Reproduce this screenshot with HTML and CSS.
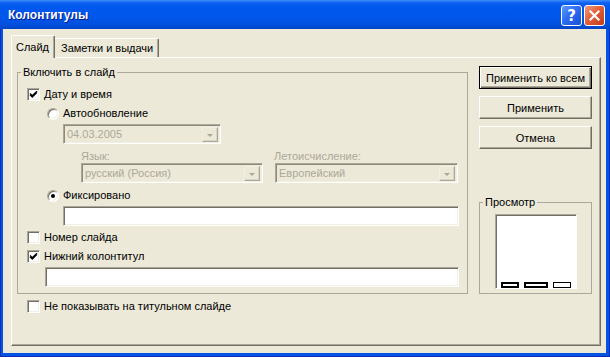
FILE: index.html
```html
<!DOCTYPE html>
<html lang="ru">

<head>
    <meta charset="UTF-8">
    <title>Колонтитулы</title>
    <link rel="stylesheet" href="styles.css">
</head>

<body>
    <main class="window">
        <header class="titlebar">
            <span class="title">Колонтитулы</span>
            <div class="caption-buttons">
                <div class="cap-btn help">?</div>
                <div class="cap-btn close">
                    <svg width="19" height="19" viewBox="0 0 19 19">
                        <path d="M5.5 5.5 L13.5 13.5 M13.5 5.5 L5.5 13.5" stroke="#fff" stroke-width="2.2" stroke-linecap="square" />
                    </svg>
                </div>
            </div>
        </header>

        <section class="client">
            <nav class="tabs">
                <div class="tab active">Слайд</div>
                <div class="tab">Заметки и выдачи</div>
            </nav>

            <section class="panel">
                <div class="left-col">
                    <fieldset class="group main-group">
                        <legend>Включить в слайд</legend>

                        <div class="row r-date">
                            <span class="check on"><svg width="9" height="9" viewBox="0 0 9 9"><path d="M1 3.5 L3.3 5.8 L8 1.2 M1 4.7 L3.3 7 L8 2.4" stroke="#000" stroke-width="1.3" fill="none" /></svg></span>
                            Дату и время
                        </div>
                        <div class="row r-auto">
                            <span class="radio"></span>
                            Автообновление
                        </div>
                        <div class="combo date-combo">
                            <span class="combo-text">04.03.2005</span>
                            <span class="combo-btn"><i class="arrow"></i></span>
                        </div>
                        <div class="row labels">
                            <span class="label lang-label">Язык:</span>
                            <span class="label">Летоисчисление:</span>
                        </div>
                        <div class="combos">
                            <div class="combo lang-combo">
                                <span class="combo-text">русский (Россия)</span>
                                <span class="combo-btn"><i class="arrow"></i></span>
                            </div>
                            <div class="combo cal-combo">
                                <span class="combo-text">Европейский</span>
                                <span class="combo-btn"><i class="arrow"></i></span>
                            </div>
                        </div>
                        <div class="row r-fixed">
                            <span class="radio on"></span>
                            Фиксировано
                        </div>
                        <div class="textbox fixed-box"></div>
                        <div class="row r-num">
                            <span class="check"></span>
                            Номер слайда
                        </div>
                        <div class="row r-footer">
                            <span class="check on"><svg width="9" height="9" viewBox="0 0 9 9"><path d="M1 3.5 L3.3 5.8 L8 1.2 M1 4.7 L3.3 7 L8 2.4" stroke="#000" stroke-width="1.3" fill="none" /></svg></span>
                            Нижний колонтитул
                        </div>
                        <div class="textbox footer-box"></div>
                    </fieldset>

                    <div class="row r-title">
                        <span class="check"></span>
                        Не показывать на титульном слайде
                    </div>
                </div>

                <div class="right-col">
                    <div class="btn default">Применить ко всем</div>
                    <div class="btn">Применить</div>
                    <div class="btn">Отмена</div>

                    <fieldset class="group preview-group">
                        <legend>Просмотр</legend>
                        <div class="preview">
                            <div class="bars">
                                <span class="bar"></span>
                                <span class="bar wide"></span>
                                <span class="bar thin"></span>
                            </div>
                        </div>
                    </fieldset>
                </div>
            </section>
        </section>
    </main>
</body>

</html>
```

FILE: styles.css
```css
body {
    margin: 0;
    background: #fff;
    font-family: 'Liberation Sans', Arial, sans-serif;
    font-size: 11px;
    color: #000;
}

.window {
    width: 610px;
    height: 357px;
    display: flex;
    flex-direction: column;
    background: #0553e2;
    box-shadow: inset 1px 0 #0a2cc0, inset -1px 0 #0a2cc0, inset 0 -1px #0a2cc0;
}

/* title bar */

.titlebar {
    height: 29px;
    flex: none;
    display: flex;
    align-items: center;
    justify-content: space-between;
    padding: 0 5px 0 8px;
    background: linear-gradient(#3d8ef9 0, #0b5fef 3px, #0058ee 8px, #0156ea 60%, #0150de 85%, #0144c4 100%);
}

.title {
    color: #fff;
    font-weight: bold;
    font-size: 12px;
    text-shadow: 1px 1px #0a1a8c;
    margin-top: 1px;
}

.caption-buttons {
    display: flex;
    gap: 2px;
    margin-top: 2px;
}

.cap-btn {
    width: 21px;
    height: 21px;
    box-sizing: border-box;
    border: 1px solid #fff;
    border-radius: 3px;
    display: flex;
    align-items: center;
    justify-content: center;
}

.help {
    background: linear-gradient(135deg, #5c9cff 0, #2e6cf0 45%, #1650d8 100%);
    color: #fff;
    font-weight: bold;
    font-size: 15px;
    font-family: 'DejaVu Sans', sans-serif;
}

.close {
    background: linear-gradient(135deg, #f09a7c 0, #e2603a 45%, #c13a18 100%);
}

/* dialog body */

.client {
    flex: 1;
    margin: 0 4px 4px 3px;
    background: #ece9d8;
    padding: 6px 5px 7px 8px;
    box-sizing: border-box;
}

.tabs {
    height: 22px;
    display: flex;
    align-items: flex-end;
}

.tab {
    height: 19px;
    box-sizing: border-box;
    padding: 3px 5px 0 6px;
    line-height: 13px;
    border-top: 1px solid #fff;
    border-right: 1px solid #716f64;
    box-shadow: inset -1px 0 #aca899;
    border-radius: 0 2px 0 0;
    background: #ece9d8;
}

.tab.active {
    height: 23px;
    margin-bottom: -1px;
    padding: 5px 6px 0 4px;
    border-left: 1px solid #fff;
    border-radius: 2px 2px 0 0;
    position: relative;
    z-index: 1;
    width: 44px;
}

.panel {
    height: 289px;
    box-sizing: border-box;
    border: 1px solid;
    border-color: #fff #716f64 #716f64 #fff;
    box-shadow: inset -1px -1px #aca899;
    padding: 8px 7px 0 5px;
    display: flex;
    gap: 11px;
}

/* group boxes */

.group {
    margin: 0;
    box-sizing: border-box;
    border: 1px solid #aca899;
    min-width: 0;
}

.group legend {
    padding: 0 2px;
    line-height: 13px;
    height: 13px;
}

.main-group {
    width: 451px;
    height: 228px;
    padding: 9px 8px 5px 9px;
}

.main-group legend {
    margin-left: -6px;
}

.row {
    display: flex;
    align-items: center;
    height: 13px;
    line-height: 13px;
    white-space: nowrap;
}

.row .check {
    margin-right: 4px;
}

.row .radio {
    margin-right: 4px;
}

.r-auto {
    margin: 6px 0 0 20px;
}

.date-combo {
    width: 158px;
    margin: 4px 0 0 36px;
}

.labels {
    margin: 6px 0 0 54px;
    color: #aca899;
}

.lang-label {
    width: 193px;
}

.combos {
    display: flex;
    gap: 12px;
    margin-left: 54px;
}

.lang-combo {
    width: 182px;
    height: 21px;
}

.cal-combo {
    width: 183px;
    height: 21px;
}

.r-fixed {
    margin: 6px 0 0 20px;
}

.fixed-box {
    width: 396px;
    margin: 4px 0 0 36px;
}

.r-num {
    margin-top: 5px;
}

.r-footer {
    margin-top: 6px;
}

.footer-box {
    width: 414px;
    margin: 4px 0 0 18px;
}

.r-title {
    margin: 6px 0 0 10px;
}

/* controls */

.check {
    width: 13px;
    height: 13px;
    flex: none;
    box-sizing: border-box;
    background: #fff;
    border: 1px solid;
    border-color: #aca899 #fff #fff #aca899;
    box-shadow: inset 1px 1px #716f64, inset -1px -1px #f1efe2;
    display: flex;
    align-items: center;
    justify-content: center;
}

.radio {
    width: 12px;
    height: 12px;
    flex: none;
    box-sizing: border-box;
    border-radius: 50%;
    background: #fff;
    border: 1px solid;
    border-color: #aca899 #fff #fff #aca899;
    box-shadow: inset 1px 1px #716f64, inset -1px -1px #f1efe2;
    display: flex;
    align-items: center;
    justify-content: center;
}

.radio.on::after {
    content: '';
    width: 4px;
    height: 4px;
    border-radius: 50%;
    background: #000;
}

.combo {
    height: 20px;
    box-sizing: border-box;
    display: flex;
    align-items: stretch;
    border: 1px solid;
    border-color: #aca899 #fff #fff #aca899;
    box-shadow: inset 1px 1px #8d8a7c, inset -1px -1px #f1efe2;
    padding: 2px 2px 1px 2px;
    color: #aca899;
}

.combo-text {
    flex: 1;
    padding-left: 1px;
    line-height: 15px;
}

.combo-btn {
    width: 16px;
    box-sizing: border-box;
    border: 1px solid;
    border-color: #f1efe2 #aca899 #aca899 #f1efe2;
    box-shadow: inset -1px -1px #d8d4c4;
    display: flex;
    align-items: center;
    justify-content: center;
}

.arrow {
    width: 0;
    height: 0;
    border-left: 3px solid transparent;
    border-right: 3px solid transparent;
    border-top: 3px solid #aca899;
    margin-top: 1px;
}

.textbox {
    height: 20px;
    box-sizing: border-box;
    background: #fff;
    border: 1px solid;
    border-color: #aca899 #fff #fff #aca899;
    box-shadow: inset 1px 1px #716f64, inset -1px -1px #f1efe2;
}

/* right column */

.right-col {
    width: 113px;
    display: flex;
    flex-direction: column;
    gap: 7px;
}

.btn {
    height: 23px;
    box-sizing: border-box;
    border: 1px solid;
    border-color: #fff #716f64 #716f64 #fff;
    box-shadow: inset -1px -1px #aca899;
    display: flex;
    align-items: center;
    justify-content: center;
    background: #ece9d8;
}

.btn.default {
    border: 1px solid #000;
    box-shadow: inset 1px 1px #fff, inset -1px -1px #716f64, inset -2px -2px #aca899;
}

.preview-group {
    width: 113px;
    height: 98px;
    margin-top: 40px;
    padding: 5px 0 4px 0;
}

.preview-group legend {
    margin-left: 3px;
}

.preview {
    width: 82px;
    height: 75px;
    margin: 0 auto;
    box-sizing: border-box;
    background: #fff;
    border: 1px solid;
    border-color: #aca899 #fff #fff #aca899;
    box-shadow: inset 1px 1px #716f64;
    display: flex;
    flex-direction: column;
    justify-content: flex-end;
    padding: 0 0 0 5px;
}

.bars {
    display: flex;
    gap: 5px;
}

.bar {
    width: 18px;
    height: 6px;
    box-sizing: border-box;
    border: 2px solid #000;
    background: #fff;
}

.bar.wide {
    width: 24px;
}

.bar.thin {
    border-width: 1px;
}
```
